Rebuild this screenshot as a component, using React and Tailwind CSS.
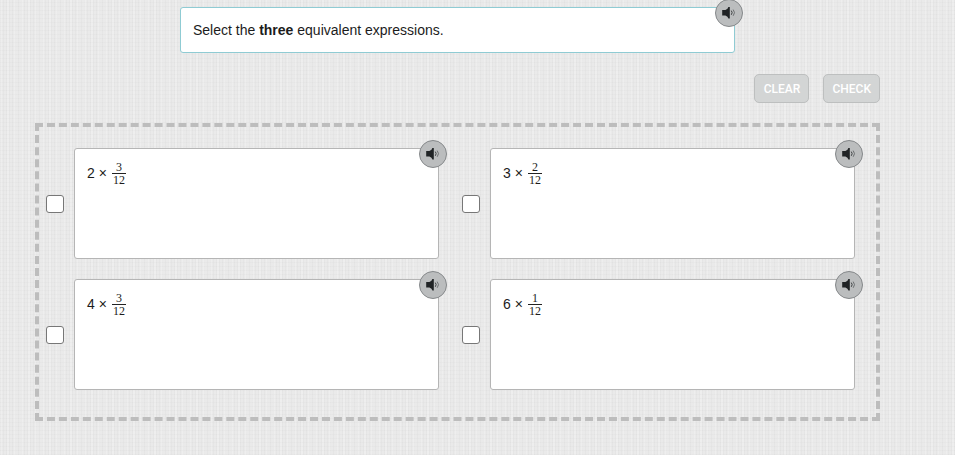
import React, { useState } from 'react';

const choices = [
  { id: 'a', factor: 2, top: 3, bottom: 12 },
  { id: 'b', factor: 3, top: 2, bottom: 12 },
  { id: 'c', factor: 4, top: 3, bottom: 12 },
  { id: 'd', factor: 6, top: 1, bottom: 12 },
];

function SpeakerButton({ label }) {
  return (
    <button
      type="button"
      aria-label={label}
      className="absolute -top-[9px] -right-[9px] w-7 h-7 rounded-full border border-[#85888a] bg-[#bbbdbe] flex items-center justify-center"
    >
      <svg className="w-4 h-4" viewBox="0 0 16 16" fill="none">
        <path d="M1.2 5H4.4Q7 4.2 7.4 2H8.8V13.4H7.4Q7 11.2 4.4 10.4H1.2Z" fill="#202325" />
        <path d="M10.3 5.6Q12 7.6 10.3 9.8" stroke="#3c3f41" strokeWidth="1" />
        <path d="M12.2 4.6Q14.8 7.6 12.2 10.8" stroke="#6c6f71" strokeWidth="1" />
      </svg>
    </button>
  );
}

function Fraction({ top, bottom }) {
  return (
    <span className="inline-flex flex-col items-center w-[14px] font-['Liberation_Serif',serif] text-[12px] leading-[12px]">
      <span className="w-full text-center border-b border-[#222]">{top}</span>
      <span>{bottom}</span>
    </span>
  );
}

function App() {
  const [selected, setSelected] = useState([]);

  const toggle = (id) => {
    setSelected(selected.includes(id) ? selected.filter(s => s !== id) : [...selected, id]);
  };

  return (
    <div className="min-h-screen pt-[7px] pb-8 pl-[35px] pr-[75px] bg-[#eaeaea] bg-[repeating-linear-gradient(90deg,#00000005_0_1px,transparent_1px_3px),repeating-linear-gradient(0deg,#00000004_0_1px,transparent_1px_4px),repeating-linear-gradient(90deg,#ffffff30_0_2px,transparent_2px_7px)] font-['Liberation_Sans',Arial,sans-serif] text-[14px] text-[#1c1c1c]">
      {/* Prompt */}
      <div className="relative max-w-[555px] mx-auto h-[46px] px-3 flex items-center bg-white border border-[#8fcbd3] rounded-[3px]">
        <p>Select the <b>three</b> equivalent expressions.</p>
        <SpeakerButton label="Read the question aloud" />
      </div>

      {/* Actions */}
      <div className="flex justify-end gap-[14px] mt-[21px] mb-5 font-[Roboto,sans-serif] text-[12px] font-medium text-white">
        <button type="button" onClick={() => setSelected([])} className="min-w-[55px] h-[29px] px-2 rounded-[5px] border border-[#bdbfbf] bg-[#d3d5d5]">CLEAR</button>
        <button type="button" className="min-w-[56px] h-[29px] px-2 rounded-[5px] border border-[#bdbfbf] bg-[#d3d5d5]">CHECK</button>
      </div>

      {/* Answer choices */}
      <div className="grid grid-cols-2 gap-x-[23px] gap-y-5 border-4 border-dashed border-[#bdbdbd] pt-[21px] pb-[27px] pl-[7px] pr-[21px]">
        {choices.map(({ id, factor, top, bottom }) => (
          <div key={id} className="flex items-center gap-[10px]">
            <input
              id={id}
              type="checkbox"
              checked={selected.includes(id)}
              onChange={() => toggle(id)}
              className="appearance-none shrink-0 w-[18px] h-[18px] rounded-[3px] border border-[#777] bg-white checked:bg-[#8fcbd3]"
            />
            <div className="relative flex-1 h-[111px] bg-white border border-[#b5b5b5] rounded-[3px]">
              <label htmlFor={id} className="flex items-center h-full px-3 pt-[13px] pb-[73px]">
                <span>{factor} ×</span>
                <span className="ml-[5px] flex"><Fraction top={top} bottom={bottom} /></span>
              </label>
              <SpeakerButton label={`Read ${factor} times ${top} over ${bottom} aloud`} />
            </div>
          </div>
        ))}
      </div>
    </div>
  );
}

export default App;
